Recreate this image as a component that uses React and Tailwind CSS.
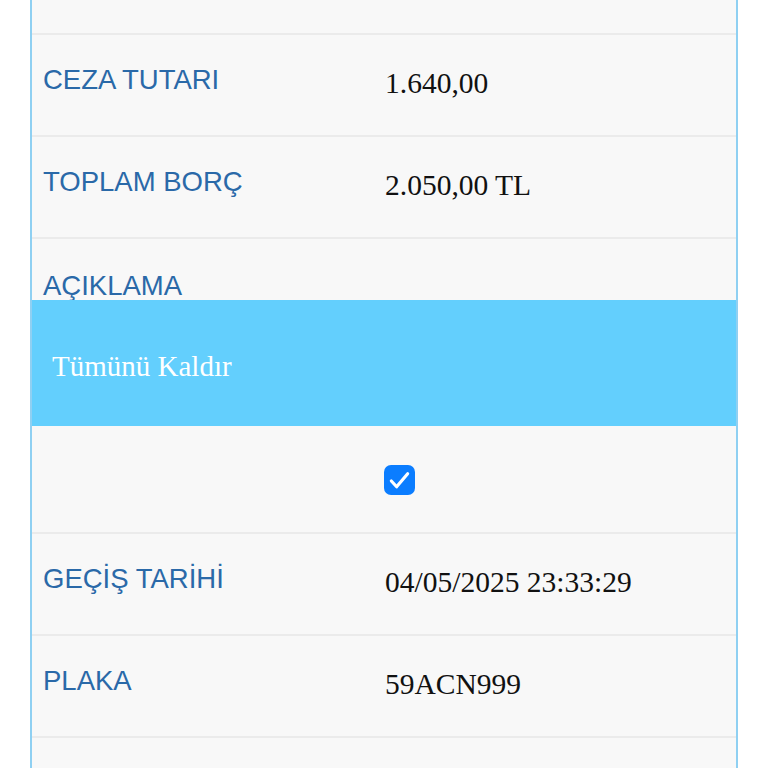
import React from "react";

const sans = "font-['Liberation_Sans',Arial,sans-serif]";
const serif = "font-['Liberation_Serif','Times_New_Roman',serif]";

function Row({ label, value, className = "h-[102px]" }) {
  return (
    <div className={`grid grid-cols-[353px_1fr] bg-[#f8f8f8] border-b-2 border-[#ebebeb] ${className}`}>
      <div className={`pl-[11px] pt-[31px] text-[27.5px] leading-none text-[#2a69a8] ${sans}`}>
        {label}
      </div>
      <div className={`pt-[34px] text-[29.5px] leading-none text-[#111] ${serif}`}>
        {value}
      </div>
    </div>
  );
}

export default function App() {
  return (
    <div className="h-[768px] overflow-hidden bg-white px-[30px]">
      <div className="border-x-2 border-[#8fd0f2] bg-[#f8f8f8] h-full">
        {/* partial top row */}
        <div className="h-[35px] bg-[#f8f8f8] border-b-2 border-[#ebebeb]" />

        <Row label="CEZA TUTARI" value="1.640,00" />
        <Row label="TOPLAM BORÇ" value="2.050,00 TL" />
        <div className="h-[61px] bg-[#f8f8f8] overflow-hidden">
          <div className={`pl-[11px] pt-[33px] text-[27.5px] leading-none text-[#2a69a8] ${sans}`}>
            AÇIKLAMA
          </div>
        </div>

        {/* sticky band */}
        <div className="h-[126px] bg-[#63cffd] flex items-center pl-[20px] pt-[8px]">
          <span className={`text-[29px] text-white ${serif}`}>Tümünü Kaldır</span>
        </div>

        {/* checkbox row */}
        <div className="h-[108px] grid grid-cols-[353px_1fr] bg-[#f8f8f8] border-b-2 border-[#ebebeb]">
          <div />
          <div className="pt-[39px]">
            <div className="w-[31px] h-[30px] -ml-[1px] rounded-[7px] bg-[#0b7dff] flex items-center justify-center">
              <svg viewBox="0 0 24 24" className="w-[23px] h-[23px]" fill="none" stroke="white" strokeWidth="3.3" strokeLinecap="round" strokeLinejoin="round">
                <path d="M3.5 12.5l5.5 6L20.5 5" />
              </svg>
            </div>
          </div>
        </div>

        <Row label="GEÇİŞ TARİHİ" value="04/05/2025 23:33:29" />
        <Row label="PLAKA" value="59ACN999" />
        <div className="h-[40px] bg-[#f8f8f8]" />
      </div>
    </div>
  );
}
